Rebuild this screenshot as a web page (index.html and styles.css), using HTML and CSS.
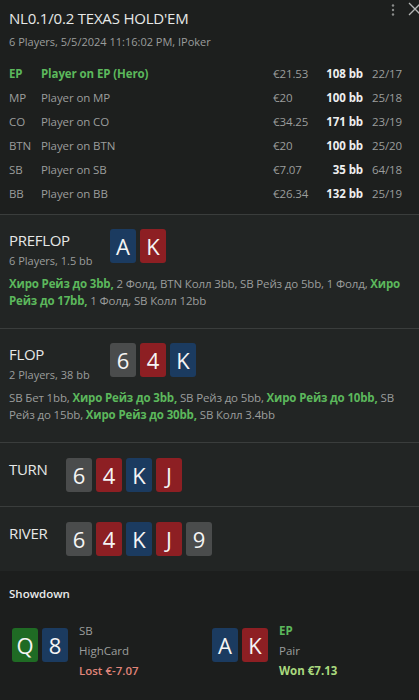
FILE: index.html
```html
<!DOCTYPE html>
<html>
<head>
<meta charset="utf-8">
<link rel="stylesheet" href="styles.css">
</head>
<body>
<div class="app">
  <header class="head">
    <div class="tools">
      <svg class="dots" width="4" height="12" viewBox="0 0 4 12"><circle cx="2" cy="1.5" r="1.2" fill="#8a8c8b"/><circle cx="2" cy="6" r="1.2" fill="#8a8c8b"/><circle cx="2" cy="10.5" r="1.2" fill="#8a8c8b"/></svg>
      <svg class="close" width="14" height="14" viewBox="0 0 14 14"><path d="M1 1L13 13M13 1L1 13" stroke="#b5b7b6" stroke-width="1.3"/></svg>
    </div>
    <h1 class="title">NL0.1/0.2 TEXAS HOLD'EM</h1>
    <div class="sub">6 Players, 5/5/2024 11:16:02 PM, IPoker</div>
    <div class="players">
      <div class="row hero"><span class="pos">EP</span><span class="name">Player on EP (Hero)</span><span class="money">€21.53</span><span class="bb">108 bb</span><span class="stat">22/17</span></div>
      <div class="row"><span class="pos">MP</span><span class="name">Player on MP</span><span class="money">€20</span><span class="bb">100 bb</span><span class="stat">25/18</span></div>
      <div class="row"><span class="pos">CO</span><span class="name">Player on CO</span><span class="money">€34.25</span><span class="bb">171 bb</span><span class="stat">23/19</span></div>
      <div class="row"><span class="pos">BTN</span><span class="name">Player on BTN</span><span class="money">€20</span><span class="bb">100 bb</span><span class="stat">25/20</span></div>
      <div class="row"><span class="pos">SB</span><span class="name">Player on SB</span><span class="money">€7.07</span><span class="bb">35 bb</span><span class="stat">64/18</span></div>
      <div class="row"><span class="pos">BB</span><span class="name">Player on BB</span><span class="money">€26.34</span><span class="bb">132 bb</span><span class="stat">25/19</span></div>
    </div>
  </header>

  <section class="street">
    <div class="street-top">
      <div class="street-info">
        <div class="street-name">PREFLOP</div>
        <div class="street-sub">6 Players, 1.5 bb</div>
      </div>
      <div class="cards"><span class="card blue">A</span><span class="card red">K</span></div>
    </div>
    <p class="actions"><b class="g">Хиро Рейз до 3bb,</b> 2 Фолд, BTN Колл 3bb, SB Рейз до 5bb, 1 Фолд, <b class="g">Хиро Рейз до 17bb,</b> 1 Фолд, SB Колл 12bb</p>
  </section>

  <section class="street">
    <div class="street-top">
      <div class="street-info">
        <div class="street-name">FLOP</div>
        <div class="street-sub">2 Players, 38 bb</div>
      </div>
      <div class="cards"><span class="card grey">6</span><span class="card red">4</span><span class="card blue">K</span></div>
    </div>
    <p class="actions">SB Бет 1bb, <b class="g">Хиро Рейз до 3bb,</b> SB Рейз до 5bb, <b class="g">Хиро Рейз до 10bb,</b> SB Рейз до 15bb, <b class="g">Хиро Рейз до 30bb,</b> SB Колл 3.4bb</p>
  </section>

  <section class="street short">
    <div class="street-top">
      <div class="street-name narrow">TURN</div>
      <div class="cards"><span class="card grey">6</span><span class="card red">4</span><span class="card blue">K</span><span class="card red">J</span></div>
    </div>
  </section>

  <section class="street short last">
    <div class="street-top">
      <div class="street-name narrow">RIVER</div>
      <div class="cards"><span class="card grey">6</span><span class="card red">4</span><span class="card blue">K</span><span class="card red">J</span><span class="card grey">9</span></div>
    </div>
  </section>

  <section class="showdown">
    <div class="sd-title">Showdown</div>
    <div class="sd-hands">
      <div class="hand">
        <div class="cards"><span class="card green">Q</span><span class="card blue">8</span></div>
        <div class="hand-info">
          <div class="hpos">SB</div>
          <div class="hrank">HighCard</div>
          <div class="lost">Lost €-7.07</div>
        </div>
      </div>
      <div class="hand">
        <div class="cards"><span class="card blue">A</span><span class="card red">K</span></div>
        <div class="hand-info">
          <div class="hpos win">EP</div>
          <div class="hrank">Pair</div>
          <div class="won">Won €7.13</div>
        </div>
      </div>
    </div>
  </section>
</div>
</body>
</html>
```

FILE: styles.css
```css
* { box-sizing: border-box; }
html, body { margin: 0; padding: 0; background: #1c1e1d; }
body {
  font-family: "Open Sans", "Noto Sans", sans-serif;
  color: #9b9d9c;
  width: 419px;
  height: 700px;
  overflow: hidden;
}
.app { display: flex; flex-direction: column; }

.head {
  position: relative;
  background: #1d1f1e;
  padding: 8px 9px 9px 9px;
  border-bottom: 1px solid #3a3d3c;
}
.tools {
  position: absolute;
  top: 2px;
  right: -3px;
  display: flex;
  gap: 13px;
  align-items: flex-start;
}
.dots { margin-top: 2px; }
.title {
  margin: 0;
  font-size: 15px;
  font-weight: 400;
  color: #e6e8e7;
  line-height: 20px;
  letter-spacing: -0.2px;
}
.sub {
  margin-top: 6px;
  font-size: 11px;
  line-height: 16px;
}
.players { margin-top: 11px; display: flex; flex-direction: column; }
.row {
  display: grid;
  grid-template-columns: 32px 232px 50px 40px 40px;
  height: 24px;
  align-items: center;
  font-size: 11.5px;
  letter-spacing: -0.1px;
}
.row .bb { color: #eeeeee; font-weight: 700; text-align: right; }
.row .stat { padding-left: 9px; }
.row.hero .pos, .row.hero .name { color: #5cb85c; font-weight: 700; }

.street {
  background: #222524;
  border-bottom: 1px solid #3a3d3c;
  padding: 14px 9px 19px 9px;
}
.street-top { display: flex; align-items: flex-start; }
.street-info { width: 101px; padding-top: 1px; }
.street-name {
  font-size: 15px;
  color: #e6e8e7;
  line-height: 20px;
  letter-spacing: -0.3px;
}
.street-name.narrow { width: 57px; padding-top: 1px; }
.street-sub { font-size: 11px; line-height: 17px; margin-top: 2px; }
.actions {
  margin: 6px 0 0 0;
  font-size: 11.5px;
  line-height: 17px;
  letter-spacing: -0.15px;
}
.actions .g { color: #5cb85c; font-weight: 700; }
.street.short { padding: 15px 9px 14px 9px; }
.street.short.last { border-bottom: none; padding-bottom: 15px; }

.cards { display: flex; gap: 4px; }
.card {
  width: 26px;
  height: 34px;
  border-radius: 3px;
  display: flex;
  align-items: center;
  justify-content: center;
  color: #f5f5f5;
  font-size: 22px;
  line-height: 1;
}
.card.blue { background: #1b3b60; }
.card.red { background: #8d1f23; }
.card.grey { background: #4a4c4c; }
.card.green { background: #1f6b24; }

.showdown {
  background: #1c1e1d;
  padding: 15px 9px 20px 9px;
  flex: 1;
}
.sd-title {
  color: #e8eaea;
  font-size: 11.5px;
  font-weight: 600;
  line-height: 16px;
}
.sd-hands {
  display: grid;
  grid-template-columns: 200px 200px;
  margin-top: 22px;
  padding-left: 3px;
}
.hand { display: flex; align-items: flex-start; }
.hand .cards { margin-top: 4px; }
.hand-info { margin-left: 11px; font-size: 11.5px; line-height: 20px; margin-top: -3px; }
.hpos.win { color: #5cb85c; font-weight: 700; }
.lost { color: #e0857a; font-weight: 600; }
.won { color: #a9d97e; font-weight: 700; }
```
